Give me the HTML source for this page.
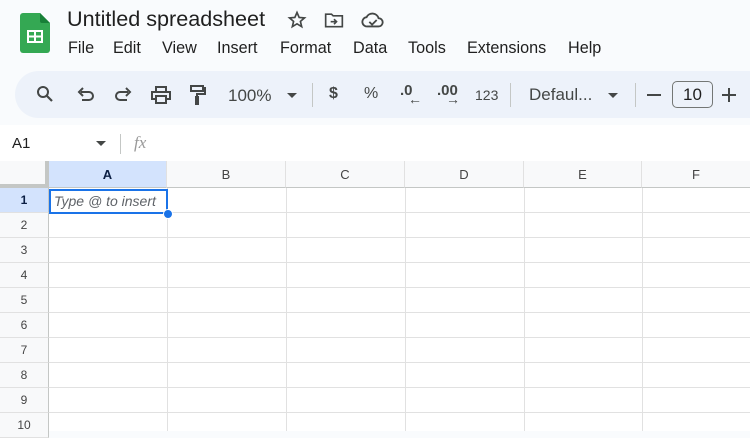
<!DOCTYPE html>
<html><head><style>
*{margin:0;padding:0;box-sizing:border-box}
body{width:750px;height:431px;overflow:hidden;background:#f9fbfd;font-family:"Liberation Sans",Arial,sans-serif;color:#1f1f1f;position:relative}
.abs{position:absolute}
.title{left:67px;top:6px;font-size:21.6px;color:#1f1f1f}
.menu{top:39px;font-size:16.2px;color:#1f1f1f}
.tb{left:15px;top:71px;width:760px;height:47px;background:#edf2fa;border-radius:24px}
.ti{top:84px;font-size:16px;color:#444746}
.sep{width:1px;background:#c4c7c5}
.grid{left:0;top:161px;width:750px;height:270px;background:#fff}
.ch{top:161px;height:27px;background:#f8f9fa;font-size:13px;color:#444;text-align:center;line-height:27px;border-right:1px solid #e1e1e1;border-bottom:1px solid #c4c7c5}
.rh{left:0;width:49px;height:25px;background:#f8f9fa;font-size:12px;color:#444;text-align:center;line-height:25px;border-bottom:1px solid #e1e1e1;border-right:1px solid #c4c7c5}
.vl{top:188px;width:1px;height:243px;background:#e1e1e1}
.hl{left:49px;width:701px;height:1px;background:#e1e1e1}
</style></head><body>
<svg class="abs" style="left:20px;top:13px" width="30" height="40" viewBox="0 0 30 40"><path d="M3 0h17l10 10v27a3 3 0 0 1-3 3H3a3 3 0 0 1-3-3V3a3 3 0 0 1 3-3z" fill="#34a853"/><path d="M20 0l10 10h-8a2 2 0 0 1-2-2z" fill="#188038"/><rect x="7" y="17" width="16" height="13" fill="#fff"/><rect x="9" y="19" width="5" height="3.5" fill="#34a853"/><rect x="16" y="19" width="5" height="3.5" fill="#34a853"/><rect x="9" y="24.5" width="5" height="3.5" fill="#34a853"/><rect x="16" y="24.5" width="5" height="3.5" fill="#34a853"/></svg>
<div class="abs title">Untitled spreadsheet</div>
<svg class="abs" style="left:287px;top:10px" width="20" height="20" viewBox="0 0 24 24"><path d="M12 3l2.6 6 6.4.5-4.9 4.2 1.5 6.3L12 16.6 6.4 20l1.5-6.3L3 9.5l6.4-.5z" fill="none" stroke="#444746" stroke-width="2"/></svg>
<svg class="abs" style="left:324px;top:11px" width="20" height="18" viewBox="0 0 24 20"><path d="M2 3h7l2 2h11v13H2z" fill="none" stroke="#444746" stroke-width="2"/><path d="M8 12h7m-3-3l3 3-3 3" fill="none" stroke="#444746" stroke-width="2"/></svg>
<svg class="abs" style="left:361px;top:11px" width="24" height="18" viewBox="0 0 26 18"><path d="M7 16a5 5 0 0 1-1-10 7 7 0 0 1 13 1 4.5 4.5 0 0 1 0 9z" fill="none" stroke="#444746" stroke-width="2"/><path d="M9 11l3 3 5-5" fill="none" stroke="#444746" stroke-width="2"/></svg>
<div class="abs menu" style="left:68px">File</div>
<div class="abs menu" style="left:113px">Edit</div>
<div class="abs menu" style="left:162px">View</div>
<div class="abs menu" style="left:217px">Insert</div>
<div class="abs menu" style="left:280px">Format</div>
<div class="abs menu" style="left:353px">Data</div>
<div class="abs menu" style="left:408px">Tools</div>
<div class="abs menu" style="left:467px">Extensions</div>
<div class="abs menu" style="left:568px">Help</div>
<div class="abs tb"></div>
<svg class="abs" style="left:36px;top:85px" width="18" height="18" viewBox="0 0 18 18"><circle cx="7" cy="7" r="5" fill="none" stroke="#444746" stroke-width="2"/><path d="M11 11l5 5" stroke="#444746" stroke-width="2.2"/></svg>
<svg class="abs" style="left:77px;top:87px" width="18" height="16" viewBox="0 0 18 16"><path d="M4 5h8a4 4 0 0 1 0 8H5M6 1L2 5l4 4" fill="none" stroke="#444746" stroke-width="2"/></svg>
<svg class="abs" style="left:114px;top:87px" width="18" height="16" viewBox="0 0 18 16"><path d="M14 5H6a4 4 0 0 0 0 8h7M12 1l4 4-4 4" fill="none" stroke="#444746" stroke-width="2"/></svg>
<svg class="abs" style="left:150px;top:85px" width="22" height="20" viewBox="0 0 22 20"><path d="M6 6V2h10v4M6 14H2V7h18v7h-4M6 11h10v7H6z" fill="none" stroke="#444746" stroke-width="2"/></svg>
<svg class="abs" style="left:188px;top:84px" width="20" height="22" viewBox="0 0 20 22"><path d="M3 2h12v5H3zM15 4h2v6H9v3M8 13h2v7H8z" fill="none" stroke="#444746" stroke-width="2"/></svg>
<div class="abs ti" style="left:228px;top:86px;font-size:17px">100%</div>
<div class="abs" style="left:287px;top:93px;border:5px solid transparent;border-top:5px solid #444746"></div>
<div class="abs sep" style="left:312px;top:83px;height:24px"></div>
<div class="abs ti" style="left:329px;top:85px;font-weight:bold">$</div>
<div class="abs ti" style="left:364px;top:85px">%</div>
<div class="abs ti" style="left:400px;top:82px;font-size:15px;font-weight:bold">.0</div><div class="abs ti" style="left:408px;top:91px;font-size:14px;font-weight:bold">←</div>
<div class="abs ti" style="left:437px;top:82px;font-size:15px;font-weight:bold">.00</div><div class="abs ti" style="left:446px;top:91px;font-size:14px;font-weight:bold">→</div>
<div class="abs ti" style="left:475px;top:87px;font-size:14px">123</div>
<div class="abs sep" style="left:510px;top:83px;height:24px"></div>
<div class="abs ti" style="left:529px;top:85px;font-size:17px">Defaul...</div>
<div class="abs" style="left:608px;top:93px;border:5px solid transparent;border-top:5px solid #444746"></div>
<div class="abs sep" style="left:635px;top:83px;height:24px"></div>
<div class="abs" style="left:647px;top:94px;width:14px;height:2px;background:#444746"></div>
<div class="abs" style="left:672px;top:81px;width:41px;height:27px;border:1px solid #747775;border-radius:5px;font-size:17px;text-align:center;line-height:25px;color:#1f1f1f">10</div>
<div class="abs" style="left:722px;top:94px;width:14px;height:2px;background:#444746"></div>
<div class="abs" style="left:728px;top:88px;width:2px;height:14px;background:#444746"></div>
<div class="abs" style="left:0;top:125px;width:750px;height:36px;background:#fff"></div>
<div class="abs" style="left:12px;top:135px;font-size:15px">A1</div>
<div class="abs" style="left:96px;top:141px;border:5px solid transparent;border-top:5px solid #444746"></div>
<div class="abs sep" style="left:120px;top:134px;height:20px"></div>
<div class="abs" style="left:134px;top:133px;font-size:17px;font-style:italic;font-family:'Liberation Serif',serif;color:#999">fx</div>
<div class="abs grid"></div>
<div class="abs ch" style="left:0;width:49px;border-right:4px solid #c4c7c5;border-bottom:4px solid #c4c7c5"></div>
<div class="abs ch" style="left:49px;width:118px;background:#d3e3fd;font-weight:bold;color:#0b1f44">A</div>
<div class="abs ch" style="left:167px;width:119px">B</div>
<div class="abs ch" style="left:286px;width:119px">C</div>
<div class="abs ch" style="left:405px;width:119px">D</div>
<div class="abs ch" style="left:524px;width:118px">E</div>
<div class="abs ch" style="left:642px;width:108px;border-right:none">F</div>
<div class="abs vl" style="left:167px"></div><div class="abs vl" style="left:286px"></div><div class="abs vl" style="left:405px"></div><div class="abs vl" style="left:524px"></div><div class="abs vl" style="left:642px"></div>
<div class="abs hl" style="top:212px"></div><div class="abs hl" style="top:237px"></div><div class="abs hl" style="top:262px"></div><div class="abs hl" style="top:287px"></div><div class="abs hl" style="top:312px"></div><div class="abs hl" style="top:337px"></div><div class="abs hl" style="top:362px"></div><div class="abs hl" style="top:387px"></div><div class="abs hl" style="top:412px"></div>
<div class="abs rh" style="top:188px;background:#d3e3fd;font-weight:bold;color:#0b1f44">1</div>
<div class="abs rh" style="top:213px">2</div><div class="abs rh" style="top:238px">3</div><div class="abs rh" style="top:263px">4</div><div class="abs rh" style="top:288px">5</div><div class="abs rh" style="top:313px">6</div><div class="abs rh" style="top:338px">7</div><div class="abs rh" style="top:363px">8</div><div class="abs rh" style="top:388px">9</div><div class="abs rh" style="top:413px">10</div>
<div class="abs" style="left:49px;top:189px;width:119px;height:25px;border:2px solid #1a73e8;font-size:14px;font-style:italic;color:#5f6368;line-height:21px;padding-left:3px">Type @ to insert</div>
<div class="abs" style="left:163px;top:209px;width:10px;height:10px;border-radius:50%;background:#1a73e8;border:1px solid #fff"></div>
</body></html>
